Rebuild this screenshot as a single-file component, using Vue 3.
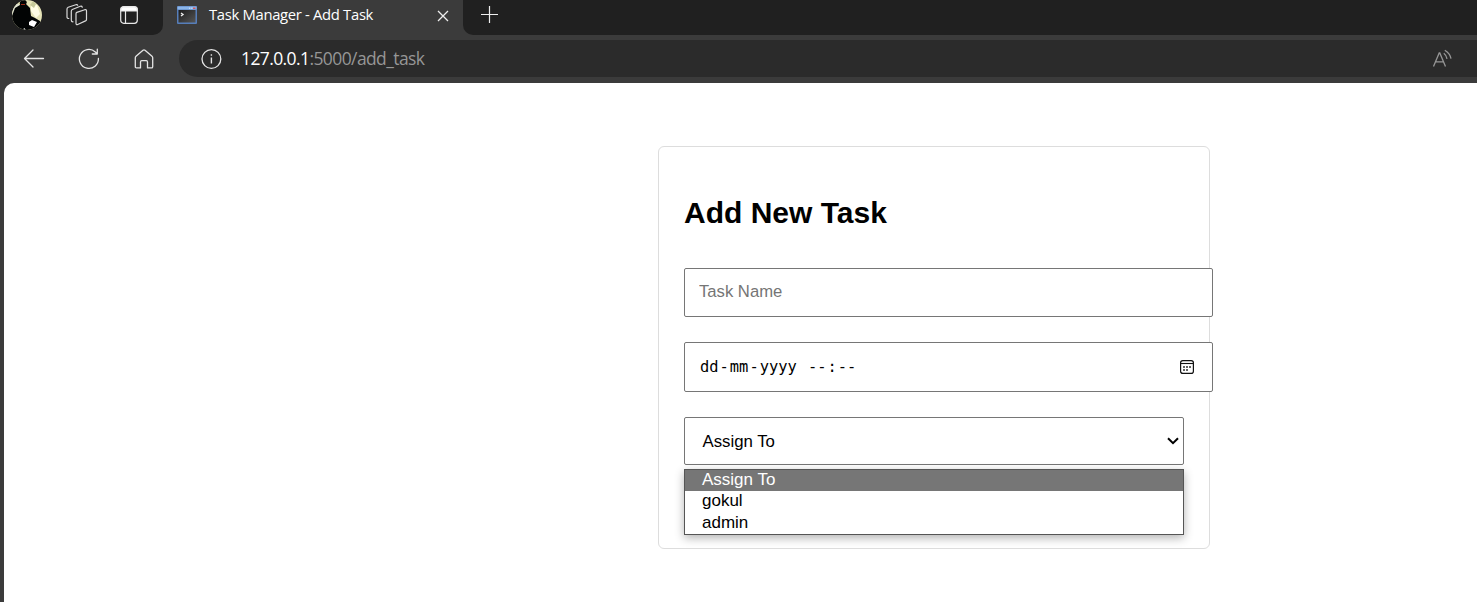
<script setup>
import { ref } from 'vue'

const users = ['Assign To', 'gokul', 'admin']
const selected = ref('Assign To')
</script>

<template>
  <div class="window">
    <header class="tabs">
      <div class="strip left">
        <svg class="avatar" width="30" height="30" viewBox="0 0 30 30">
          <defs><clipPath id="disc"><circle cx="15" cy="15" r="15" /></clipPath></defs>
          <g clip-path="url(#disc)">
            <rect width="30" height="30" fill="#e6e4b8" />
            <path d="M19 3l6 2 3 9-4 4-5-7z" fill="#fffde4" />
            <path d="M21 1l3 3-2 4-4-3z" fill="#c6c999" />
            <path d="M0 8l4-5 4 2-4 5-4 6z" fill="#dfe2cf" />
            <path d="M8 5Q7 1 10 0h3q3 2 1 4l4 4 1 8 4 2 5 3 2 9H0V16l3-8z" fill="#020404" />
            <path d="M17 22l3-2 5 2-3 5-5-2z" fill="#fff" />
            <path d="M12 28l1 2" stroke="#ddd" />
            <path d="M9 4.500h4" stroke="#962b17" stroke-width="1" />
          </g>
        </svg>
        <svg class="stack" width="22" height="22" viewBox="0 0 22 22" fill="none" stroke="#d9d9d9" stroke-width="1.200" stroke-linejoin="round" stroke-linecap="round">
          <path d="M10.800 8.400l8-2.700q1.700-.5 1.700 1.200v8.500q0 1-1 1.500l-7.800 3.600q-1.700.7-1.700-1.200V9.800q0-1 .8-1.400z" />
          <path d="M7 17.800q-1.700 0-1.700-1.600V7.200q0-1.200 1-1.700l8-3.200q1.500-.5 2 .9" />
          <path d="M2.800 14.500Q1 14.500 1 13V5q0-1.300 1.200-1.800L9.800.7q1.300-.4 1.900.6" />
        </svg>
        <svg class="panel" width="18" height="18" viewBox="0 0 18 18" fill="none" stroke="#e8e8e8" stroke-width="1.200">
          <rect x=".7" y=".7" width="16.600" height="16.600" rx="3" />
          <path d="M1 3q0-2 2-2h12q2 0 2 2v2H1z" fill="#fff" />
          <path d="M5.500 5v12" />
        </svg>
      </div>
      <div class="tab">
        <svg class="favicon" width="20" height="18" viewBox="0 0 20 18">
          <defs>
            <linearGradient id="term" x2="1" y2="1"><stop stop-color="#1d1d1d" /><stop offset="1" stop-color="#555" /></linearGradient>
          </defs>
          <rect width="20" height="18" rx="1" fill="#567eba" />
          <rect x=".5" y=".5" width="19" height="3" fill="#8bb5e9" />
          <rect x="1.500" y="4" width="17" height="12.500" fill="url(#term)" />
          <path d="M16 1.500h2.500v1.500H16z" fill="#cf5b62" />
          <path d="M12 2.200h1.200m1 0h1.200" stroke="#d9edff" />
          <path d="M4 7l2 1.500L4 10" fill="none" stroke="#eee" stroke-width="1.400" />
        </svg>
        <span class="title">Task Manager - Add Task</span>
        <svg class="close" width="12" height="12" viewBox="0 0 12 12" stroke="#eee" stroke-width="1.300"><path d="M1 1l10 10M11 1L1 11" /></svg>
      </div>
      <div class="strip right">
        <svg width="17" height="17" viewBox="0 0 17 17" stroke="#eee" stroke-width="1.200"><path d="M8.500 0v17M0 8.500h17" /></svg>
      </div>
    </header>

    <nav class="toolbar">
      <svg class="back" width="22" height="20" viewBox="0 0 22 20" fill="none" stroke="#e4e4e4" stroke-width="1.300" stroke-linecap="round" stroke-linejoin="round"><path d="M20.500 9.500H1.500M10 1L1.500 9.500 10 18" /></svg>
      <svg class="reload" width="22" height="22" viewBox="0 0 22 22" fill="none" stroke="#e4e4e4" stroke-width="1.300" stroke-linecap="round" stroke-linejoin="round"><path d="M20.400 10.500A9.500 9.500 0 1 1 17.300 3.900L19 5.500M19.300 1.200V6h-5" /></svg>
      <svg class="home" width="20" height="20" viewBox="0 0 20 20" fill="none" stroke="#e4e4e4" stroke-width="1.300" stroke-linejoin="round"><path d="M1.300 8.700Q1.300 7.800 2 7.200L9 1.300q1-.8 2 0l7 5.900q.7.600.7 1.500v9q0 1.200-1.200 1.200h-4v-6q0-1.200-1.200-1.200H7.700q-1.200 0-1.200 1.200v6h-4q-1.200 0-1.200-1.200z" /></svg>
      <div class="address">
        <svg width="22" height="22" viewBox="0 0 22 22" fill="none" stroke="#e4e4e4" stroke-width="1.300"><circle cx="11.400" cy="11" r="9.400" /><path d="M11.400 9.500v6M11.400 6.300v1.500" stroke-width="1.400" /></svg>
        <span class="url"><b>127.0.0.1</b>:5000/add_task</span>
        <svg class="read" width="20" height="20" viewBox="0 0 20 20" fill="none" stroke="#969696" stroke-width="1.300"><path d="M1.500 17.500L7.200 4h.6l5.700 13.500M3.500 12.800h8M11.800 4.300q2.600 2 3.200 5.500M12.800 1.200q5.300 3.200 6.200 8.400" /></svg>
      </div>
    </nav>

    <main class="page">
      <form class="card" @submit.prevent>
        <h2>Add New Task</h2>
        <input class="field" type="text" placeholder="Task Name">
        <div class="field date">
          <span class="part">dd</span>-<span class="part">mm</span>-<span class="part">yyyy</span>&nbsp;<span class="part">--</span>:<span class="part">--</span>
          <svg width="14" height="14" viewBox="0 0 14 14" fill="none" stroke="#111"><rect x=".6" y=".6" width="12.800" height="12.800" rx="2.200" stroke-width="1.200" /><path d="M1 3.500h12" stroke-width="1.100" /><path d="M3 7h2m1 0h2m1 0h2M3 10h2m1 0h2" stroke="#333" stroke-width="1.600" /></svg>
        </div>
        <div class="picker">
          <div class="select"><span>{{ selected }}</span>
            <svg width="12" height="8" viewBox="0 0 12 8" fill="none" stroke="#000" stroke-width="2"><path d="M1 1.200l5 5 5-5" /></svg>
          </div>
          <ul class="menu">
            <li v-for="user in users" :key="user" :class="{ active: user === selected }" @click="selected = user">{{ user }}</li>
          </ul>
        </div>
      </form>
    </main>
  </div>
</template>

<style>
body { margin: 0; overflow: hidden; }
</style>

<style scoped>
* { box-sizing: border-box; }
.window { height: 602px; display: flex; flex-direction: column; background: #3b3b3b; overflow: hidden; font-family: "Liberation Sans", Arial, sans-serif; }
svg { display: block; flex: none; }
.tabs { display: flex; height: 35px; font-family: "Open Sans", "Noto Sans", sans-serif; }
.strip { background: #202020; display: flex; }
.left { width: 163px; border-radius: 0 0 10px 0; padding-left: 12px; }
.stack { margin: 4px 0 0 24px; }
.panel { margin: 6px 0 0 32px; }
.right { flex: 1; border-radius: 0 0 0 10px; padding: 6px 0 0 18px; }
.tab { width: 300px; display: flex; padding: 0 14px; height: 35px; }
.favicon { margin-top: 6px; }
.title { margin-left: 12px; font-size: 14.8px; letter-spacing: -.31px; line-height: 28px; color: #fff; white-space: nowrap; }
.close { margin: 10px 0 0 auto; }
.toolbar { height: 48px; display: flex; align-items: center; padding: 0 0 1px 23px; }
.reload { margin-left: 33px; }
.home { margin-left: 34px; }
.address { flex: 1; height: 37px; margin-left: 25px; background: #2b2b2b; border-radius: 19px 0 0 19px; display: flex; align-items: center; padding: 0 25px 0 21px; }
.url { margin: 0 0 2px 19px; color: #969696; font: 17.5px/24px "Open Sans", "Noto Sans", sans-serif; letter-spacing: -.6px; white-space: nowrap; }
.url b { color: #fff; font-weight: 400; }
.read { margin-left: auto; }
.page { flex: 1; margin-left: 4px; background: #fff; border-radius: 10px 0 0 0; padding: 63px 0 0 654px; }
.card { width: 552px; height: 403px; border: 1px solid #ddd; border-radius: 6px; padding: 0 25px; }
h2 { font-size: 30px; line-height: 36px; margin: 48px 0 37px; white-space: nowrap; }
.field { display: block; width: 529px; height: 49px; border: 1px solid #767676; border-radius: 2px; background: #fff; padding: 0 14px 2px; font: 16.67px "Liberation Sans", Arial, sans-serif; margin: 0 0 25px; }
.field::placeholder { color: #757575; }
.date { height: 50px; display: flex; align-items: center; font: 15.4px "DejaVu Sans Mono", monospace; padding: 0 18px 0 14px; }
.part { padding: 0 1px; }
.date svg { margin-left: auto; }
.picker { width: 500px; position: relative; }
.select { height: 48px; border: 1px solid #767676; border-radius: 2px; display: flex; align-items: center; justify-content: space-between; padding: 0 4px 0 17.5px; font-size: 16.8px; }
.select span { padding-top: 1px; }
.menu { position: absolute; top: 52px; left: 0; width: 500px; height: 66px; margin: 0; padding: 0; list-style: none; background: #fff; border: 1px solid #555; box-shadow: 0 3px 9px rgba(0, 0, 0, .3); font-size: 17px; }
.menu li { height: 22px; line-height: 20px; padding-left: 17px; }
.menu li:first-child { height: 21px; }
.menu .active { background: #767676; color: #fff; }
</style>
